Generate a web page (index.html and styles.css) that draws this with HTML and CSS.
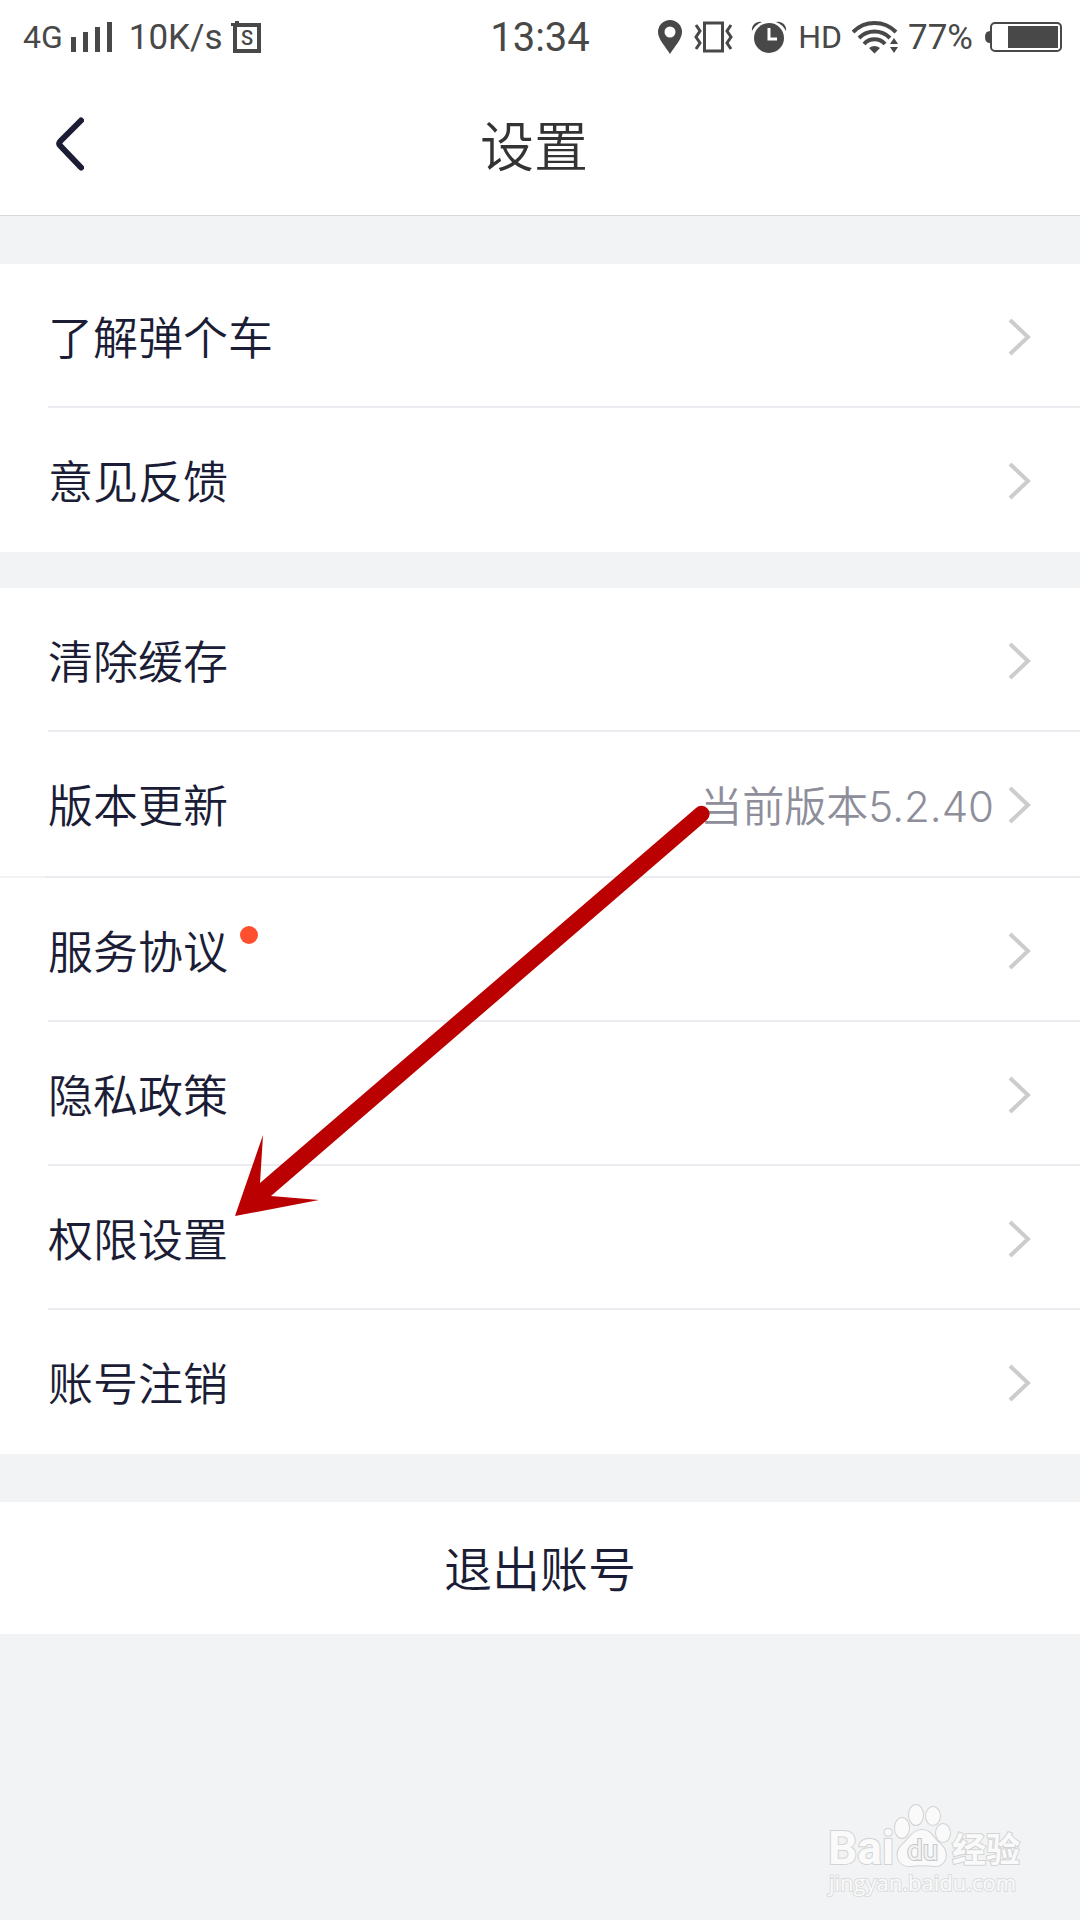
FILE: index.html
```html
<!DOCTYPE html>
<html lang="zh-CN">
<head>
  <meta charset="UTF-8">
  <meta name="viewport" content="width=device-width, initial-scale=1.0">
  <title>设置</title>
  <link rel="stylesheet" href="styles.css">
</head>
<body>
  <div class="status-bar">
    <div class="status-left">
      <span class="network">4G</span>
      <svg width="50" height="32" viewBox="0 0 50 32" fill="#484848">
        <path d="M0 16h5v15H0zM12 11h5v20h-5zM24 6h5v25h-5zM36 1h5v30h-5z"/>
      </svg>
      <span class="speed">10K/s</span>
      <svg width="32" height="34" viewBox="0 0 32 34">
        <path d="M4 5h24v26H4z" fill="none" stroke="#484848" stroke-width="4"/>
        <path d="M0 3h4V1h4v5H0z" fill="#484848"/>
        <text class="sim-letter" x="16" y="25" text-anchor="middle">S</text>
      </svg>
    </div>
    <span class="time">13:34</span>
    <div class="status-right">
      <svg width="24" height="34" viewBox="0 0 24 34" fill="#484848">
        <path fill-rule="evenodd" d="M12 0a12 12 0 0 1 12 12c0 7-7 14-12 22C7 26 0 19 0 12A12 12 0 0 1 12 0zm0 6.500a5.500 5.500 0 1 0 0 11 5.500 5.500 0 0 0 0-11z"/>
      </svg>
      <svg width="42" height="34" viewBox="-1 0 42 34" fill="none" stroke="#484848">
        <path d="M11.500 3h18v28h-18z" stroke-width="3"/>
        <path d="M3 5l4 6-4 6 4 6-4 6M38 5l-4 6 4 6-4 6 4 6" stroke-width="3"/>
      </svg>
      <svg width="44" height="34" viewBox="0 0 44 34">
        <circle cx="25" cy="18" r="15" fill="#484848"/>
        <path d="M8 11a8 8 0 0 1 10-9 19 19 0 0 0-10 9zM42 11a8 8 0 0 0-10-9 19 19 0 0 1 10 9z" fill="#484848"/>
        <path d="M25 8v11h8" fill="none" stroke="#fff" stroke-width="3"/>
      </svg>
      <span class="hd">HD</span>
      <svg width="46" height="34" viewBox="4 0 46 34">
        <g fill="none" stroke="#484848" stroke-width="4">
          <path d="M5 12a30 30 0 0 1 43 0"/>
          <path d="M11 18a22 22 0 0 1 31 0"/>
          <path d="M16 24a14 14 0 0 1 21 0"/>
        </g>
        <path d="M21 28q5.500-4 11 0l-5.500 5.500zM42 24l4-6 4 6zM42 27h8l-4 6z" fill="#484848"/>
      </svg>
      <span class="battery-level">77%</span>
      <svg width="79" height="32" viewBox="-2 0 79 32">
        <rect x="6" y="2" width="70" height="28" rx="4" fill="none" stroke="#484848" stroke-width="2"/>
        <path d="M23 5h50v22H23zM5 10v12q-5 0-5-6t5-6z" fill="#484848"/>
      </svg>
    </div>
  </div>

  <header class="nav">
    <button class="back" aria-label="返回">
      <svg width="28" height="54" viewBox="0 0 28 54">
        <path d="M25 3.500L4.500 24q-2.500 2.500 0 5L25 50.500" fill="none" stroke="#1b1d36" stroke-width="6" stroke-linecap="round"/>
      </svg>
    </button>
    <h1>设置</h1>
  </header>

  <main>
    <nav class="group">
      <a class="row" href="#about">
        <span>了解弹个车</span>
        <svg class="chevron" viewBox="0 0 24 38"><path d="M2 2l18 17L2 36"/></svg>
      </a>
      <a class="row" href="#feedback">
        <span>意见反馈</span>
        <svg class="chevron" viewBox="0 0 24 38"><path d="M2 2l18 17L2 36"/></svg>
      </a>
    </nav>

    <nav class="group">
      <a class="row" href="#cache">
        <span>清除缓存</span>
        <svg class="chevron" viewBox="0 0 24 38"><path d="M2 2l18 17L2 36"/></svg>
      </a>
      <div class="version">
        <a class="row" href="#version">
          <span>版本更新</span>
          <span class="value">当前版本5.2.40</span>
          <svg class="chevron" viewBox="0 0 24 38"><path d="M2 2l18 17L2 36"/></svg>
        </a>
      </div>
      <a class="row" href="#service">
        <span>服务协议</span>
        <i class="dot"></i>
        <svg class="chevron" viewBox="0 0 24 38"><path d="M2 2l18 17L2 36"/></svg>
      </a>
      <a class="row" href="#privacy">
        <span>隐私政策</span>
        <svg class="chevron" viewBox="0 0 24 38"><path d="M2 2l18 17L2 36"/></svg>
      </a>
      <a class="row" href="#permission">
        <span>权限设置</span>
        <svg class="chevron" viewBox="0 0 24 38"><path d="M2 2l18 17L2 36"/></svg>
      </a>
      <a class="row" href="#cancel">
        <span>账号注销</span>
        <svg class="chevron" viewBox="0 0 24 38"><path d="M2 2l18 17L2 36"/></svg>
      </a>

      <!-- arrow pointing at 权限设置 -->
      <svg class="arrow" width="476" height="412" viewBox="0 0 476 412" fill="#ba0000">
        <path d="M0 411L28 330 25 378 461 3a8 8 0 0 1 11 12L36 391 84 395z"/>
      </svg>
    </nav>

    <button class="logout">退出账号</button>
  </main>

  <svg class="watermark" width="210" height="100" viewBox="0 0 210 100">
    <g class="paw">
      <ellipse cx="82" cy="28" rx="7" ry="10"/>
      <ellipse cx="96" cy="15" rx="7" ry="10"/>
      <ellipse cx="113" cy="16" rx="7" ry="9"/>
      <ellipse cx="123" cy="33" rx="7" ry="9"/>
      <path d="M102 30c9 0 11 8 17 13 12 9 7 24-5 23-8-1-16-1-24 0-12 1-17-13-7-22 7-6 10-14 19-14z"/>
    </g>
    <text class="mark-bai" x="8" y="64">Bai</text>
    <text class="mark-du" x="87" y="60">du</text>
    <text class="mark-cn" x="132" y="62">经验</text>
    <text class="mark-url" x="9" y="91">jingyan.baidu.com</text>
  </svg>
</body>
</html>
```

FILE: styles.css
```css
* {
  box-sizing: border-box;
}

body {
  position: relative;
  margin: 0;
  min-height: 100vh;
  font-family: Roboto, "Noto Sans CJK SC", sans-serif;
  background-color: #f1f3f5;
  color: #1b1d36;
}

button {
  margin: 0;
  padding: 0;
  border: none;
  background: none;
  font-family: inherit;
  color: inherit;
  cursor: pointer;
}

svg {
  display: block;
  flex: none;
}

.status-bar {
  display: grid;
  grid-template-columns: 1fr auto 1fr;
  align-items: center;
  height: 72px;
  padding: 2px 18px 0;
  background-color: #fff;
  color: #484848;
  line-height: 40px;
}

.status-left,
.status-right {
  display: flex;
  align-items: center;
}

.status-left {
  gap: 8px;
  padding-left: 5px;
}

.status-right {
  justify-content: flex-end;
  gap: 10px;
}

.network,
.hd {
  font-size: 32px;
}

.speed,
.battery-level {
  font-size: 35px;
}

.speed,
.time,
.battery-level {
  padding-top: 2px;
}

.time {
  font-size: 40px;
}

.sim-letter {
  font-size: 20px;
  font-weight: 500;
  fill: #484848;
}

.nav {
  display: grid;
  grid-template-columns: 1fr auto 1fr;
  align-items: center;
  height: 144px;
  padding-right: 12px;
  background-color: #fff;
  border-bottom: 1px solid #d8d8d8;
}

.back {
  justify-self: start;
  padding: 0 56px;
}

h1 {
  margin: 0;
  padding-top: 10px;
  font-size: 54px;
  font-weight: 350;
  line-height: 72px;
  color: #333;
}

main {
  padding-top: 48px;
}

.group {
  position: relative;
  margin-bottom: 36px;
  background-color: #fff;
}

.row {
  display: flex;
  align-items: center;
  height: 144px;
  margin-left: 48px;
  padding-right: 48px;
  border-bottom: 2px solid #ebecf2;
  font-size: 45px;
  font-weight: 350;
  color: #1b1d36;
  text-decoration: none;
}

.row:last-of-type {
  border-bottom-color: #fff;
}

/* this row has a full width line, paler in the left margin */
.version {
  border-bottom: 2px solid #ebecf2;
  border-image: linear-gradient(to right, #f2f2f2 48px, #ebecf2 48px) 2;
}

.value {
  margin-left: auto;
  font-family: Inter, "Noto Sans CJK SC", sans-serif;
  font-size: 42px;
  color: #8e8e9b;
}

.chevron {
  width: 24px;
  height: 38px;
  margin-top: 4px;
  margin-left: auto;
  fill: none;
  stroke: #ccc;
  stroke-width: 4;
}

.value + .chevron {
  margin-left: 14px;
}

.dot {
  align-self: flex-start;
  width: 18px;
  height: 18px;
  margin: 48px 0 0 12px;
  border-radius: 50%;
  background-color: #ff4f2e;
}

.arrow {
  position: absolute;
  left: 235px;
  top: 217px;
  pointer-events: none;
}

.logout {
  display: block;
  width: 100%;
  height: 132px;
  margin-top: 48px;
  padding-bottom: 4px;
  background-color: #fff;
  font-size: 48px;
  font-weight: 350;
}

.watermark {
  position: absolute;
  right: 50px;
  bottom: 20px;
  fill: #fafafa;
  stroke: #d2d3d4;
  stroke-width: 2px;
  paint-order: stroke;
}

.mark-bai {
  font-size: 46px;
  font-weight: 700;
}

.mark-du {
  font-size: 28px;
  fill: #f1f3f5;
  stroke: #c4c5c6;
}

.mark-cn {
  font-size: 34px;
  font-weight: 700;
}

.mark-url {
  font-family: "Open Sans", sans-serif;
  font-size: 22px;
  stroke: #dcddde;
}
```
